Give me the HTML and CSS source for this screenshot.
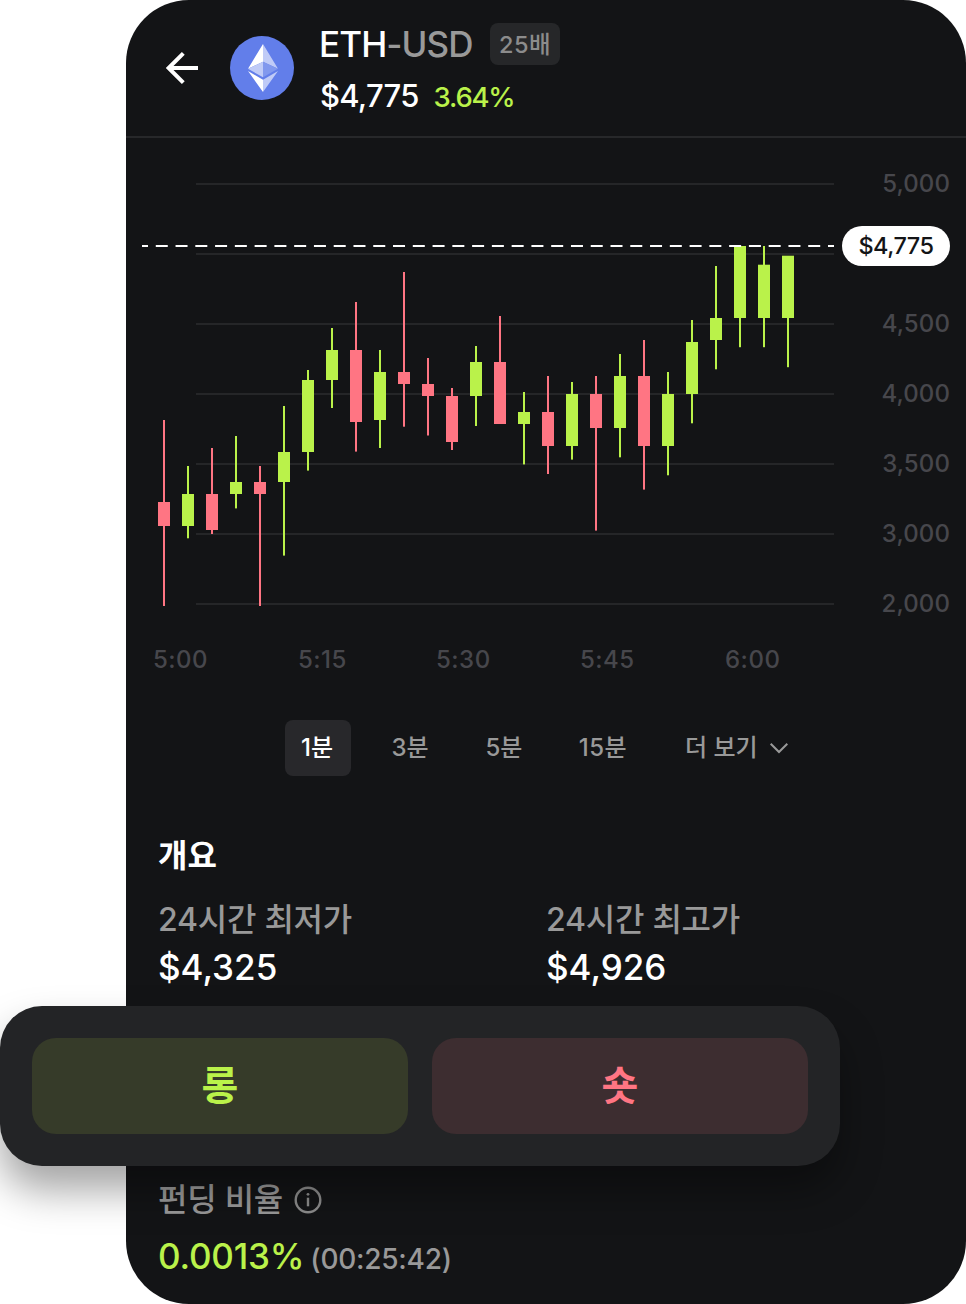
FILE: index.html
```html
<!DOCTYPE html>
<html lang="ko">
<head>
<meta charset="utf-8">
<title>ETH-USD</title>
<link rel="stylesheet" href="styles.css">
</head>
<body>
<main class="card">
  <header class="header">
    <svg class="back" width="34" height="34" viewBox="0 0 34 34" fill="none" stroke="#fff" stroke-width="4"><path d="M33 17H4M18.300 2.300 3.600 17l14.700 14.700"/></svg>
    <svg class="coin" width="64" height="64" viewBox="230 36 64 64">
      <circle cx="262" cy="68" r="32" fill="#627eea"/>
      <path fill="#fff" d="M263 44v17.700L248 68.700zM263 79.800V92L248 71z"/>
      <path fill="#c0cbf7" d="M263 44v17.700l15 7zM263 61.700V77.300l-15-8.600zM263 79.800V92l15-21z"/>
      <path fill="#8198ee" d="M263 61.700V77.300l15-8.600z"/>
    </svg>
    <div class="pair">
      <div class="pair-row"><span class="name">ETH<span class="muted">-USD</span></span><span class="badge">25배</span></div>
      <div class="price-row"><span class="price">$4,775</span><span class="change">3.64%</span></div>
    </div>
  </header>
  <svg class="chart" id="chart" width="840" height="552" viewBox="126 138 840 552"></svg>
  <nav class="tabs">
    <span class="tab active">1분</span>
    <span class="tab">3분</span>
    <span class="tab">5분</span>
    <span class="tab wide">15분</span>
    <span class="tab more">더 보기<svg width="20" height="12" viewBox="0 0 20 12" fill="none" stroke="#999" stroke-width="2"><path d="M1.700 1.700 10 10l8.300-8.300"/></svg></span>
  </nav>
  <section class="overview">
    <h2>개요</h2>
    <div class="stats">
      <div><div class="label">24시간 최저가</div><div class="value">$4,325</div></div>
      <div><div class="label">24시간 최고가</div><div class="value">$4,926</div></div>
    </div>
  </section>
  <section class="funding">
    <div class="label">펀딩 비율<svg width="28" height="28" viewBox="0 0 28 28" fill="none" stroke="#8c8c8c" stroke-width="2.400"><circle cx="14" cy="14" r="12.300"/><path d="M14 11.700v8.600"/><circle cx="14" cy="8.300" r="1.400" fill="#8c8c8c" stroke="none"/></svg></div>
    <div class="rate"><span class="pct">0.0013%</span><span class="count">(00:25:42)</span></div>
  </section>
</main>
<div class="actions">
  <button class="btn long">롱</button>
  <button class="btn short">숏</button>
</div>
<script src="chart.js"></script>
</body>
</html>
```
FILE: styles.css
```css
* { box-sizing: border-box; }
body {
  margin: 0;
  position: relative;
  width: 966px;
  height: 1304px;
  overflow: hidden;
  background: #fff;
  color: #fff;
  font-family: Inter, "Noto Sans CJK KR", sans-serif;
  font-weight: 500;
}
.card {
  margin-left: 126px;
  height: 1304px;
  background: #131416;
  border-radius: 63px;
  overflow: hidden;
}
svg { display: block; flex: none; }
.header {
  display: flex;
  align-items: center;
  height: 138px;
  border-bottom: 2px solid #27282a;
  padding-left: 39px;
}
.coin { margin-left: 31px; }
.pair { margin-left: 25px; padding-top: 2px; }
.pair-row { display: flex; align-items: center; height: 42px; margin-top: 2px; }
.name { width: 154px; font-size: 35px; line-height: 42px; letter-spacing: -0.9px; white-space: nowrap; }
.muted { color: #999; }
.badge {
  width: 70px;
  height: 42px;
  margin-left: 17px;
  border-radius: 8px;
  background: #262729;
  color: #8c8c8c;
  font-size: 23.5px;
  line-height: 43px;
  letter-spacing: 0.5px;
  text-align: center;
}
.price-row { display: flex; align-items: baseline; margin-top: 10px; line-height: 42px; padding-left: 1px; }
.price { font-size: 31px; letter-spacing: -0.75px; }
.change { font-size: 27.5px; margin-left: 15px; letter-spacing: -1.2px; color: #baf24a; }
.axis { font-size: 24px; fill: #47474c; letter-spacing: 0.1px; }
.axis.time { letter-spacing: 0.5px; }
.quote { font-size: 23.5px; fill: #131416; letter-spacing: -0.5px; }
.tabs { display: flex; gap: 24px; margin: 30px 0 0 159px; }
.tab {
  width: 70px;
  height: 56px;
  border-radius: 8px;
  font-size: 24px;
  line-height: 56px;
  text-align: center;
  white-space: nowrap;
  color: #999;
}
.tab.active { width: 66px; padding-right: 2px; background: #28282b; color: #fff; }
.tab.wide { width: 82px; padding-right: 2px; letter-spacing: 0.5px; }
.tab.more { width: auto; display: flex; align-items: center; gap: 11px; padding-left: 16px; }
.overview { margin: 56px 0 0 32px; }
h2 { margin: 0; font-size: 32px; line-height: 48px; font-weight: 700; }
.stats { display: grid; grid-template-columns: 388px 388px; margin-top: 16px; }
.label { display: flex; align-items: center; gap: 11px; height: 48px; font-size: 32px; line-height: 48px; letter-spacing: -0.25px; color: #999; }
.value { font-size: 35px; line-height: 48px; margin-top: -1px; }
.funding { margin: 185px 0 0 32px; }
.rate { display: flex; align-items: baseline; gap: 6px; margin-top: 8px; line-height: 48px; }
.pct { font-size: 35px; letter-spacing: -0.2px; color: #baf24a; }
.count { font-size: 28px; letter-spacing: -0.25px; color: #999; }
.actions {
  position: absolute;
  left: 0;
  top: 1006px;
  width: 840px;
  height: 160px;
  display: flex;
  gap: 24px;
  padding: 32px;
  border-radius: 42px;
  background: #232426;
  box-shadow: 0 24px 40px rgba(0, 0, 0, 0.36);
}
.btn {
  flex: 1;
  border: 0;
  padding: 0 0 7px;
  border-radius: 24px;
  font: inherit;
  font-size: 40px;
  font-weight: 700;
}
.long { background: #363b29; color: #baf24a; }
.short { background: #3d2d30; color: #ff7583; }
```
FILE: chart.js
```js
// Each candle: direction, high, low, body top, body bottom
const candles = [
  ["d",420,606,502,526],["u",466,538.3,494,526],["d",448,534,494,530],["u",436,508.4,482,494],
  ["d",466,606,482,494],["u",406,555.6,452,482],["u",370,470.6,380,452],["u",328,408,350,380],
  ["d",302,451.6,350,422],["u",350,448,372,420],["d",272,426.7,372,384],["d",358,435.5,384,396],
  ["d",388,450,396,442],["u",346,426,362,396],["d",316,424,362,424],["u",392,464.4,412,424],
  ["d",376,474,412,446],["u",382,459.6,394,446],["d",376,530.6,394,428],["u",354,457.3,376,428],
  ["d",340,489.6,376,446],["u",372,475.3,394,446],["u",320,423.3,342,394],["u",266,369.3,318,340],
  ["u",246,347.200,246,318],["u",246,347.200,264.700,318],["u",256,367.200,255.700,318]
];
const colors = { u: "#baf24a", d: "#ff7583" };
let out = "";
for (let y = 184; y <= 604; y += 70) out += `<path d="M196 ${y}H834" stroke="#252628" stroke-width="2"/>`;
candles.forEach(([dir, high, low, top, bottom], i) => {
  const x = 158 + i * 24;
  out += `<g fill="${colors[dir]}"><rect x="${x + 5}" y="${high}" width="2" height="${low - high}"/><rect x="${x}" y="${top}" width="12" height="${bottom - top}"/></g>`;
});
out += `<path d="M142 246H834" stroke="#fff" stroke-width="2" stroke-dasharray="12 7.771" stroke-dashoffset="6"/>`;
[["5,000",184],["4,500",324],["4,000",394],["3,500",464],["3,000",534],["2,000",604]].forEach(([s, y]) => {
  out += `<text class="axis" text-anchor="end" x="950" y="${y + 8}">${s}</text>`;
});
[["5:00",153],["5:15",298],["5:30",436],["5:45",580],["6:00",725]].forEach(([s, x]) => {
  out += `<text class="axis time" x="${x}" y="668">${s}</text>`;
});
out += `<rect x="842" y="226" width="108" height="40" rx="20" fill="#fff"/><text class="quote" text-anchor="middle" x="896" y="254">$4,775</text>`;
document.getElementById("chart").innerHTML = out;
```
